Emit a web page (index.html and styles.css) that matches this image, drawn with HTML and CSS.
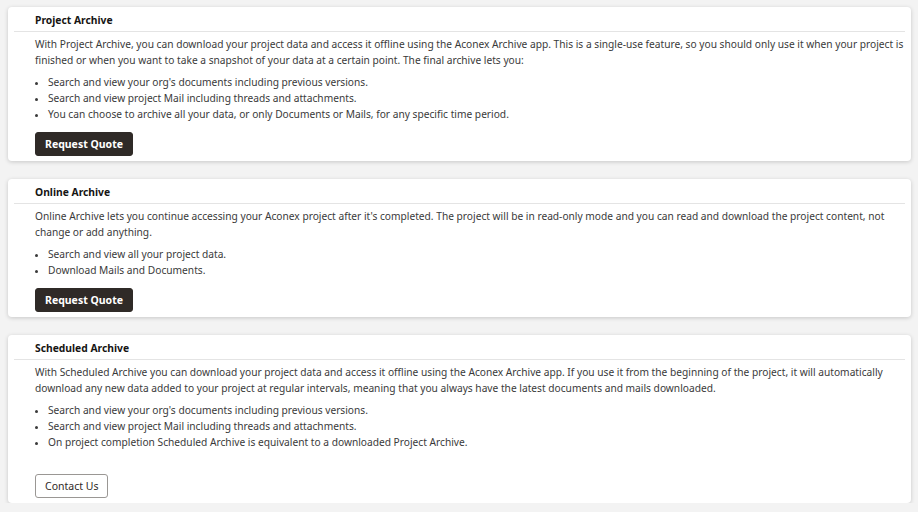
FILE: index.html
```html
<!DOCTYPE html>
<html lang="en">
<head>
<meta charset="utf-8">
<title>Archive options</title>
<link rel="stylesheet" href="styles.css">
</head>
<body>
<main class="page">
  <section class="card">
    <h2 class="card-title">Project Archive</h2>
    <div class="card-body">
      <p class="intro">With Project Archive, you can download your project data and access it offline using the Aconex Archive app. This is a single-use feature, so you should only use it when your project is finished or when you want to take a snapshot of your data at a certain point. The final archive lets you:</p>
      <ul class="points">
        <li>Search and view your org's documents including previous versions.</li>
        <li>Search and view project Mail including threads and attachments.</li>
        <li>You can choose to archive all your data, or only Documents or Mails, for any specific time period.</li>
      </ul>
      <button class="btn btn-dark">Request Quote</button>
    </div>
  </section>
  <section class="card">
    <h2 class="card-title">Online Archive</h2>
    <div class="card-body">
      <p class="intro">Online Archive lets you continue accessing your Aconex project after it's completed. The project will be in read-only mode and you can read and download the project content, not change or add anything.</p>
      <ul class="points">
        <li>Search and view all your project data.</li>
        <li>Download Mails and Documents.</li>
      </ul>
      <button class="btn btn-dark">Request Quote</button>
    </div>
  </section>
  <section class="card">
    <h2 class="card-title">Scheduled Archive</h2>
    <div class="card-body">
      <p class="intro">With Scheduled Archive you can download your project data and access it offline using the Aconex Archive app. If you use it from the beginning of the project, it will automatically download any new data added to your project at regular intervals, meaning that you always have the latest documents and mails downloaded.</p>
      <ul class="points points-spaced">
        <li>Search and view your org's documents including previous versions.</li>
        <li>Search and view project Mail including threads and attachments.</li>
        <li>On project completion Scheduled Archive is equivalent to a downloaded Project Archive.</li>
      </ul>
      <button class="btn btn-light">Contact Us</button>
    </div>
  </section>
</main>
</body>
</html>
```

FILE: styles.css
```css
* { box-sizing: border-box; }

html, body {
  margin: 0;
  padding: 0;
  background: #f3f3f3;
}

body {
  font-family: "Noto Sans", "Open Sans", sans-serif;
  font-size: 10.2px;
  color: #3a3a3a;
}

.page {
  display: flex;
  flex-direction: column;
  gap: 18px;
  padding: 7px 7px 0 8px;
}

.card {
  background: #fff;
  border-radius: 4px;
  box-shadow: 0 1px 4px rgba(0, 0, 0, 0.18);
  padding: 0 6px 5px;
}

.card-title {
  margin: 0;
  padding: 7px 21px 5px;
  font-size: 10.3px;
  line-height: 12px;
  font-weight: 700;
  color: #161513;
  border-bottom: 1px solid #e4e4e4;
}

.card-body {
  padding: 4px 1px 0 21px;
}

.intro {
  margin: 0;
  line-height: 16px;
}

.points {
  margin: 6px 0 0;
  padding: 0 0 0 13px;
  line-height: 16px;
}

.points li::marker {
  font-size: 9px;
}

.points-spaced {
  margin-bottom: 24px;
}

.btn {
  display: inline-block;
  margin-top: 10px;
  height: 24px;
  padding: 0 9px;
  border-radius: 3px;
  font-family: inherit;
  font-size: 10.5px;
  line-height: 22px;
  cursor: pointer;
}

.points-spaced + .btn { margin-top: 0; }

.btn-dark {
  background: #2f2a27;
  color: #fff;
  font-weight: 700;
  border: 1px solid #2f2a27;
}

.btn-light {
  background: #fff;
  color: #2f2a27;
  border: 1px solid #9a9794;
}
```
